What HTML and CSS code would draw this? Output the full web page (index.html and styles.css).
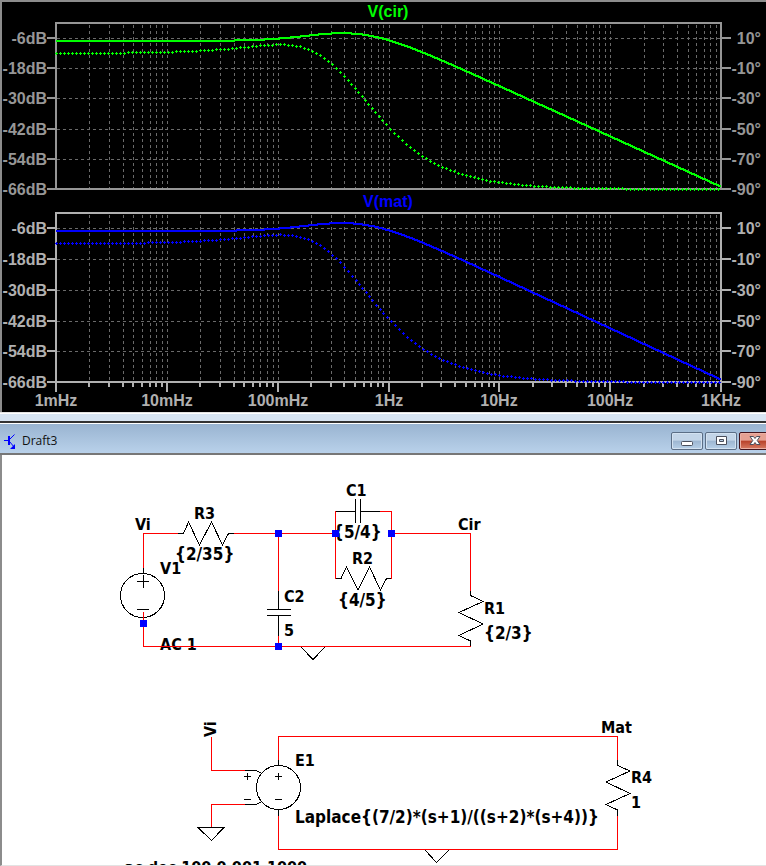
FILE: index.html
```html
<!DOCTYPE html>
<html lang="en">
<head>
<meta charset="utf-8">
<title>Draft3</title>
<link rel="stylesheet" href="styles.css">
</head>
<body>
<main class="workspace">
  <section class="wave-window" aria-label="Waveforms">
    <svg class="plot" id="plot" viewBox="2 2 764 410" role="img" aria-label="Bode plots of V(cir) and V(mat)"></svg>
  </section>
  <section class="draft-window" aria-label="Draft3">
    <header class="titlebar">
      <svg class="app-icon" viewBox="0 0 12 16" aria-hidden="true">
        <path d="M0 7.500h4M5 3v9M5.500 6.500l5-5M5.500 8.500l5 6"/>
        <path class="app-icon-wide" d="M5 3v9"/>
        <path class="app-icon-head" d="M11 11v5H6z"/>
      </svg>
      <h1 class="title">Draft3</h1>
      <div class="controls">
        <button class="control" type="button" aria-label="Minimize">
          <svg viewBox="0 0 12 12"><rect x="0.500" y="6.500" width="11" height="4" rx="1"/></svg>
        </button>
        <button class="control" type="button" aria-label="Maximize">
          <svg viewBox="0 0 12 12"><path fill-rule="evenodd" d="M1.500 1.500h10v8h-10zM4.500 4.500v2h4v-2z"/></svg>
        </button>
        <button class="control control-close" type="button" aria-label="Close">
          <svg viewBox="0 0 12 12"><path d="M1 1.500h3.500L6 3.500l1.500-2H11L8.200 5.500l2.800 4H7.500L6 7.500l-1.500 2H1l2.800-4z"/></svg>
        </button>
      </div>
    </header>
    <svg class="schematic" viewBox="2 455 764 410" role="img" aria-label="Schematic">
      <g class="label">
        <text x="135" y="530">Vi</text>
        <text x="194" y="519">R3</text>
        <text class="value" x="175" y="560">{2/35}</text>
        <text x="160" y="574">V1</text>
        <text x="160" y="650">AC 1</text>
        <text x="284" y="602">C2</text>
        <text x="284" y="636">5</text>
        <text x="346" y="496">C1</text>
        <text class="value" x="333" y="538">{5/4}</text>
        <text x="352" y="564">R2</text>
        <text class="value" x="338" y="606">{4/5}</text>
        <text x="458" y="530">Cir</text>
        <text x="484" y="614">R1</text>
        <text class="value" x="484" y="639">{2/3}</text>
        <text x="295" y="766">E1</text>
        <text class="value" x="295" y="823">Laplace{(7/2)*(s+1)/((s+2)*(s+4))}</text>
        <text x="601" y="733">Mat</text>
        <text x="631" y="783">R4</text>
        <text x="631" y="808">1</text>
        <text transform="translate(216 737) rotate(-90)">Vi</text>
        <text x="119" y="873">.ac dec 100 0.001 1000</text>
      </g>
      <g class="part">
        <path d="M178 533.500H183.500L188.500 522L199.500 545L211.500 522L222.500 545L228.500 533.500H234"/>
        <path d="M143.500 568V573M137 581.500H149M143.500 575V588M137 609.500H149"/>
        <circle cx="142.500" cy="595.500" r="22"/>
        <path d="M278.500 591V609M267 609.500H291M267 615.500H291M278.500 615V636"/>
        <path d="M335 511.500H355M355.500 499V523M360.500 499V523M361 511.500H380"/>
        <path d="M335 578.500H341L346.500 567L358 590L369.500 567L380.500 590L386.500 578.500H392"/>
        <path d="M470.500 591V595.500L483 601.500L459 612.500L483 624L459 635.500L470.500 641V646"/>
        <path d="M301 647L313 659.500L325 647"/>
        <circle cx="278.500" cy="787.500" r="22"/>
        <path d="M245 770.500H256L262 773.500M245 804.500H256L262 801.500"/>
        <path d="M244 776.500H251M247.500 773V780M275 776.500H282M278.500 773V780M244 799.500H251M275 799.500H282"/>
        <path d="M278.500 760V766M278.500 809V816"/>
        <path d="M198 827.500H224L211.500 840.500Z"/>
        <path d="M617.500 760V765.500L630 771L606 782L630 793.500L606 804.500L617.500 810V816"/>
        <path d="M425 850L436.500 862.500L449 850"/>
      </g>
      <g class="wire">
        <path d="M143.500 568V533.500H178M234 533.500H335"/>
        <path d="M143.500 612V646.500H470.500"/>
        <path d="M278.500 533V591M278.500 636V646"/>
        <path d="M335.500 511V579M380 511.500H391.500V579"/>
        <path d="M391 533.500H470.500V591"/>
        <path d="M211.500 737V770.500H245M245 804.500H211.500V827"/>
        <path d="M278.500 760V736.500H617.500V760"/>
        <path d="M278.500 816V849.500H617.500V816"/>
      </g>
      <g class="node">
        <rect x="140" y="620" width="7" height="7"/>
        <rect x="275" y="530" width="7" height="7"/>
        <rect x="275" y="643" width="7" height="7"/>
        <rect x="332" y="530" width="7" height="7"/>
        <rect x="388" y="530" width="7" height="7"/>
      </g>
    </svg>
  </section>
</main>
<script src="plot.js"></script>
</body>
</html>
```
FILE: styles.css
```css
* {
  box-sizing: border-box;
}

body {
  margin: 0;
  background: #fff;
  font-family: "Open Sans", "Noto Sans", sans-serif;
}

.workspace {
  overflow: hidden;
}

.wave-window {
  background: #000;
  border-style: solid;
  border-width: 2px 0 0 2px;
  border-color: #8c8c8c;
}

.plot,
.schematic {
  display: block;
  width: 100%;
  height: auto;
}

.plot text {
  font: bold 16px "Liberation Sans", Arial, sans-serif;
  fill: #969696;
}

.plot .pane-lower text {
  fill: #b0b0b0;
}

.plot .cir text.trace-name {
  fill: #0f0;
}

.plot .mat text.trace-name {
  fill: #00f;
}

.trace-name,
.freq {
  text-anchor: middle;
}

.level,
.phase-level {
  text-anchor: end;
}

.grid {
  fill: none;
  stroke: #6a6a6a;
  stroke-dasharray: 3 3;
  shape-rendering: crispEdges;
}

.axis {
  fill: none;
  stroke: #969696;
  stroke-width: 2;
  shape-rendering: crispEdges;
}

.pane-lower .axis {
  stroke: #b0b0b0;
}

.gain {
  fill: none;
  stroke-width: 2;
  shape-rendering: crispEdges;
}

.phase {
  stroke: none;
  shape-rendering: crispEdges;
}

.cir .gain {
  stroke: #0f0;
}

.cir .phase {
  fill: #0f0;
}

.mat .gain {
  stroke: #00f;
}

.mat .phase {
  fill: #00f;
}

.draft-window {
  border-top: 1px solid #e3e3e3;
}

.draft-window::before {
  content: "";
  display: block;
  box-sizing: border-box;
  height: 10px;
  background: #d7e4f2;
  border-top: 1px solid #fff;
  border-bottom: 2px solid #333;
}

.titlebar {
  display: flex;
  align-items: center;
  gap: 6px;
  height: 32px;
  padding: 4px 0 0 4px;
  background: linear-gradient(#99b4d1, #b9d1ea);
  border-top: 1px solid #fff;
  border-bottom: 2px solid #777;
}

.app-icon {
  width: 12px;
  height: 16px;
  fill: none;
  stroke: #00f;
}

.app-icon-wide {
  stroke-width: 2;
}

.app-icon-head {
  fill: #00f;
  stroke: none;
}

.title {
  flex: 1;
  margin: 0;
  font-size: 12px;
  font-weight: 400;
  line-height: 16px;
  color: #111;
}

.controls {
  display: flex;
  flex: none;
  gap: 2px;
  margin-right: -5px;
}

.control {
  display: flex;
  align-items: center;
  justify-content: center;
  width: 32px;
  height: 18px;
  padding: 0;
  border: 1px solid #5b6e86;
  border-radius: 2px;
  background: linear-gradient(#c3d5e8 0 45%, #9db6d1 50%, #b7d0e8);
  box-shadow: inset 0 0 0 1px #d3e2f1;
}

.control svg {
  width: 12px;
  height: 12px;
  fill: #fff;
  stroke: #4a4f5c;
}

.control-close {
  border-color: #43131c;
  background: linear-gradient(#e6a193 0 45%, #b8412a 50%, #d87a62);
  box-shadow: inset 0 0 0 1px #eab0a4;
}

.schematic {
  background: #fff;
  border-left: 2px solid #8c8c8c;
  border-bottom: 1px solid #e3e3e3;
}

.label text {
  font: bold 16px "DejaVu Sans Condensed", "Open Sans", sans-serif;
  fill: #000;
}

.label .value {
  font-size: 17px;
}

.part {
  fill: none;
  stroke: #000;
  shape-rendering: crispEdges;
}

.wire {
  fill: none;
  stroke: #f00;
  shape-rendering: crispEdges;
}

.node {
  fill: #00f;
  shape-rendering: crispEdges;
}
```
FILE: plot.js
```js
const LEFT = 56;
const RIGHT = 721;
const DECADES = 6;
const SVG_NS = "http://www.w3.org/2000/svg";
const svg = document.getElementById("plot");

function add(parent, tag, attrs, text) {
  const node = document.createElementNS(SVG_NS, tag);
  for (const key in attrs) node.setAttribute(key, attrs[key]);
  if (text) node.textContent = text;
  parent.appendChild(node);
  return node;
}

// x position of a frequency given in mHz
function xOf(freq) {
  return Math.round(LEFT + (RIGHT - LEFT) * Math.log10(freq) / DECADES);
}

// H(s) = 3.5 (s + 1) / ((s + 2)(s + 4)), evaluated at an x position
function response(x) {
  const w = 2 * Math.PI * 10 ** (-3 + DECADES * (x - LEFT) / (RIGHT - LEFT));
  return {
    db: 20 * Math.log10(3.5 * Math.hypot(w, 1) / (Math.hypot(w, 2) * Math.hypot(w, 4))),
    deg: (Math.atan(w) - Math.atan(w / 2) - Math.atan(w / 4)) * 180 / Math.PI
  };
}

function drawPane(opts) {
  const g = add(svg, "g", { class: opts.cls });
  const rows = opts.rows;
  const first = rows[0];
  const last = rows[rows.length - 1];
  let grid = "";
  let ticks = "";

  rows.forEach((y, i) => {
    if (y !== last) grid += `M${LEFT + 1} ${y + 0.5}H${RIGHT}`;
    ticks += `M47 ${y}H${LEFT}M${RIGHT} ${y}H731`;
    add(g, "text", { class: "level", x: 47, y: y + 6 }, `${-6 - 12 * i}dB`);
    add(g, "text", { class: "phase-level", x: 761, y: y + 6 }, `${10 - 20 * i}°`);
  });

  for (let d = 0; d < DECADES; d++) {
    for (let k = 1; k <= 9; k++) {
      const x = xOf(k * 10 ** d);
      if (x > LEFT) grid += `M${x + 0.5} ${opts.top + 2}V${last}`;
      if (opts.freqs) ticks += `M${x} ${last}V${last + (k === 1 ? 10 : 5)}`;
    }
  }
  if (opts.freqs) {
    ticks += `M${RIGHT} ${last}V${last + 10}`;
    opts.freqs.forEach((name, i) => {
      add(g, "text", { class: "freq", x: xOf(10 ** i), y: 406 }, name);
    });
  }

  add(g, "path", { class: "grid", d: grid });
  add(g, "path", { class: "axis", d: `M${LEFT} ${opts.top}H${RIGHT}V${last}H${LEFT}Z${ticks}` });
  add(g, "text", { class: "trace-name", x: 388, y: opts.top - 6 }, opts.name);

  const span = last - first;
  let gain = "";
  let phase = "";
  let px = -99;
  let py = -99;
  for (let x = LEFT; x <= RIGHT; x++) {
    const r = response(x);
    const gy = Math.round(first + (-6 - r.db) * span / 60);
    const y = Math.round(first + (10 - r.deg) * span / 100);
    gain += `${gain ? "L" : "M"}${x} ${gy}`;
    if (Math.max(x - px, y - py) >= 4) {
      phase += `M${x - 1} ${y}h3v1h-3zM${x} ${y - 1}h1v3h-1z`;
      px = x;
      py = y;
    }
  }
  add(g, "path", { class: "phase", d: phase });
  add(g, "path", { class: "gain", d: gain });
}

drawPane({
  cls: "pane-upper cir",
  name: "V(cir)",
  top: 23,
  rows: [38, 68, 98, 129, 159, 189]
});
drawPane({
  cls: "pane-lower mat",
  name: "V(mat)",
  top: 213,
  rows: [228, 259, 290, 321, 351, 382],
  freqs: ["1mHz", "10mHz", "100mHz", "1Hz", "10Hz", "100Hz", "1KHz"]
});
```
